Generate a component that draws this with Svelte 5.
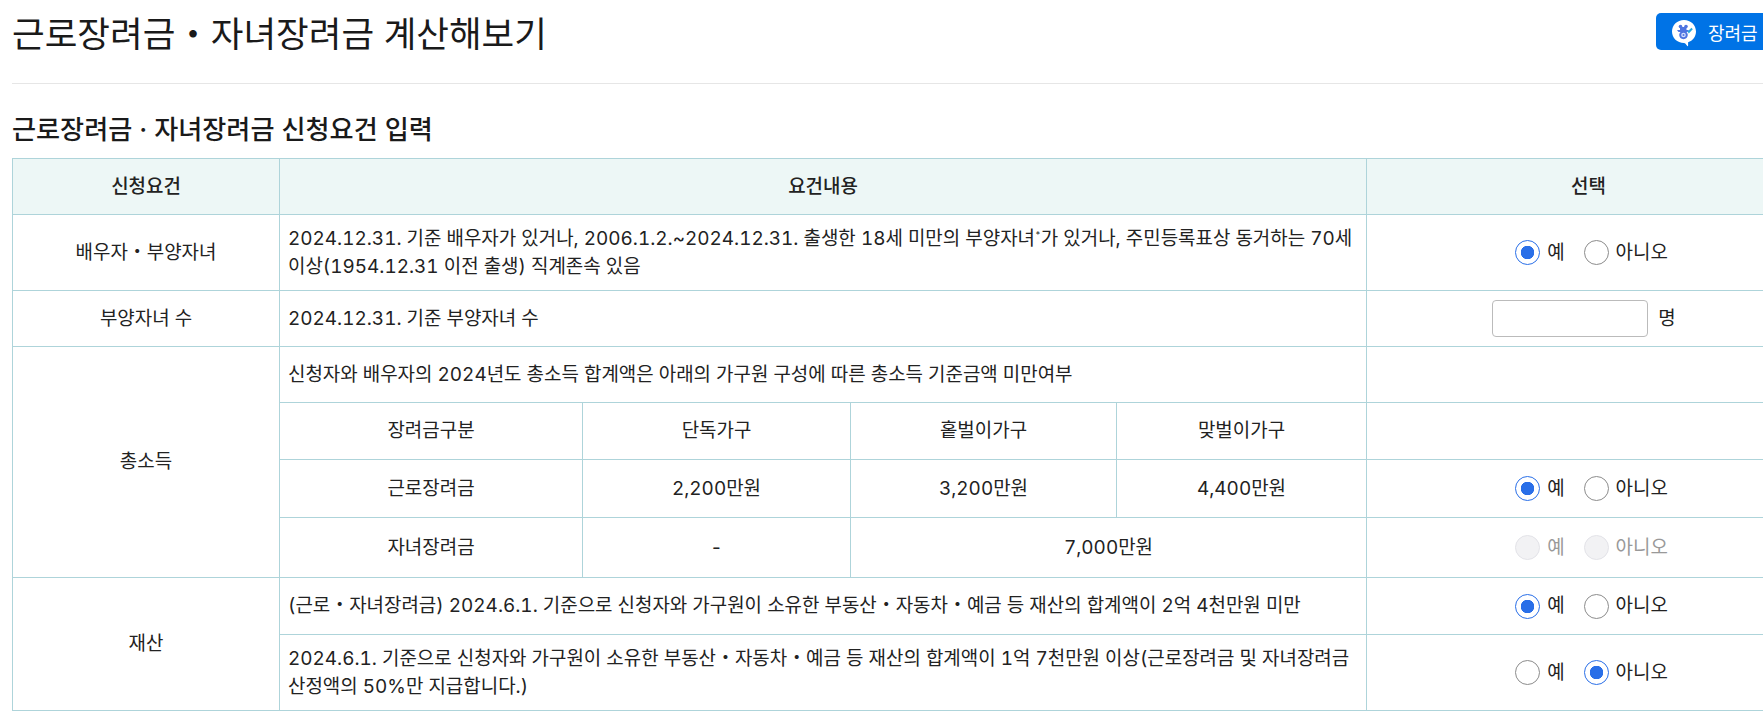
<script>
  const choice = (name, yes, disabled = false) => ({ name, yes, disabled });
</script>

{#snippet radios(c)}
  <div class="radios" class:off={c.disabled}>
    <label class="opt"><input type="radio" name={c.name} checked={c.yes === true} disabled={c.disabled} /><span>예</span></label>
    <label class="opt"><input type="radio" name={c.name} checked={c.yes === false} disabled={c.disabled} /><span>아니오</span></label>
  </div>
{/snippet}

<div class="page">
  <header class="top">
    <h1>근로장려금・자녀장려금 계산해보기</h1>
    <button class="cta" type="button">
      <svg class="logo" viewBox="0 0 26 28" width="26" height="28" aria-hidden="true">
        <path d="M13 1C6.200 1 1 6 1 12.500S6.200 24 13 24c.6 0 1.100.2 1.500.7l1.800 2.300c.3.400.8.200.8-.3v-3.400c4.700-1.600 7.900-5.800 7.900-10.800C25 6 19.800 1 13 1z" fill="#fff"/>
        <circle cx="9.500" cy="7.500" r="1.800" fill="#4f74e0"/>
        <circle cx="15" cy="7.500" r="1.800" fill="#4f74e0"/>
        <path d="M9 8h6.500v3H9z" fill="#4f74e0"/>
        <path d="M6 11h12l-1.500 2h-1c.8.800 1.300 1.900 1.300 3.100 0 2.300-1.900 4.100-4.300 4.100s-4.300-1.800-4.300-4.100c0-1.200.5-2.300 1.300-3.100H7.500z" fill="#4f74e0"/>
        <circle cx="12.500" cy="16" r="2.300" fill="#d5defb"/>
        <circle cx="12.500" cy="16" r="1" fill="#4f74e0"/>
        <path d="M16.500 12.500l4-3.700 1.300 1.500-4 4.200z" fill="#27a8e0"/>
      </svg>
      <span>장려금 안내</span>
    </button>
  </header>

  <h2>근로장려금 · 자녀장려금 신청요건 입력</h2>

  <table>
    <colgroup>
      <col class="c1" /><col class="c2" /><col class="c3" /><col class="c4" /><col class="c5" /><col class="c6" />
    </colgroup>
    <thead>
      <tr class="r56">
        <th>신청요건</th>
        <th colspan="4">요건내용</th>
        <th>선택</th>
      </tr>
    </thead>
    <tbody>
      <tr class="r76">
        <td class="ctr">배우자・부양자녀</td>
        <td colspan="4" class="txt">2024.12.31. 기준 배우자가 있거나, 2006.1.2.~2024.12.31. 출생한 18세 미만의 부양자녀<sup class="tick">*</sup>가 있거나, 주민등록표상 동거하는 70세 이상(1954.12.31 이전 출생) 직계존속 있음</td>
        <td class="ctr">{@render radios(choice('a', true))}</td>
      </tr>
      <tr class="r56">
        <td class="ctr">부양자녀 수</td>
        <td colspan="4" class="txt">2024.12.31. 기준 부양자녀 수</td>
        <td class="ctr">
          <div class="count"><input type="text" aria-label="부양자녀 수" /><span>명</span></div>
        </td>
      </tr>
      <tr class="r56">
        <td class="ctr" rowspan="4">총소득</td>
        <td colspan="4" class="txt">신청자와 배우자의 2024년도 총소득 합계액은 아래의 가구원 구성에 따른 총소득 기준금액 미만여부</td>
        <td></td>
      </tr>
      <tr class="r57">
        <td class="ctr">장려금구분</td>
        <td class="ctr">단독가구</td>
        <td class="ctr">홑벌이가구</td>
        <td class="ctr">맞벌이가구</td>
        <td></td>
      </tr>
      <tr class="r58">
        <td class="ctr">근로장려금</td>
        <td class="ctr">2,200만원</td>
        <td class="ctr">3,200만원</td>
        <td class="ctr">4,400만원</td>
        <td class="ctr">{@render radios(choice('b', true))}</td>
      </tr>
      <tr class="r60">
        <td class="ctr">자녀장려금</td>
        <td class="ctr">-</td>
        <td class="ctr" colspan="2">7,000만원</td>
        <td class="ctr">{@render radios(choice('c', null, true))}</td>
      </tr>
      <tr class="r57">
        <td class="ctr" rowspan="2">재산</td>
        <td colspan="4" class="txt">(근로・자녀장려금) 2024.6.1. 기준으로 신청자와 가구원이 소유한 부동산・자동차・예금 등 재산의 합계액이 2억 4천만원 미만</td>
        <td class="ctr">{@render radios(choice('d', true))}</td>
      </tr>
      <tr class="r76">
        <td colspan="4" class="txt">2024.6.1. 기준으로 신청자와 가구원이 소유한 부동산・자동차・예금 등 재산의 합계액이 1억 7천만원 이상(근로장려금 및 자녀장려금 산정액의 50%만 지급합니다.)</td>
        <td class="ctr">{@render radios(choice('e', false))}</td>
      </tr>
    </tbody>
  </table>
</div>

<style>
  :global(html), :global(body) {
    overflow: hidden;
    background: #fff;
  }
  .page {
    box-sizing: border-box;
    width: 1810px;
    padding-left: 12px;
    font-family: Inter, "Noto Sans CJK KR", "Noto Sans", sans-serif;
    font-variant-numeric: tabular-nums;
    color: #222;
  }
  .top {
    display: flex;
    justify-content: space-between;
    align-items: flex-start;
    height: 83px;
    border-bottom: 1px solid #e6e6e6;
  }
  h1 {
    margin: 10px 0 0;
    font-size: 35.500px;
    line-height: 50px;
    font-weight: 400;
    color: #1a1a1a;
    white-space: nowrap;
  }
  .cta {
    display: flex;
    align-items: center;
    gap: 11px;
    box-sizing: border-box;
    width: 154px;
    height: 37px;
    margin-top: 13px;
    padding: 0 0 0 15px;
    border: 0;
    border-radius: 5px;
    background: #0073e6;
    color: #fff;
    font: 400 18px Inter, "Noto Sans CJK KR", sans-serif;
    white-space: nowrap;
  }
  .logo { flex: none; margin-top: 3px; }
  h2 {
    margin: 29px 0 0;
    height: 45px;
    font-size: 26.150px;
    line-height: 34px;
    font-weight: 500;
    color: #1a1a1a;
  }
  table {
    border-collapse: collapse;
    table-layout: fixed;
    width: 1798px;
    font-size: 18.950px;
    line-height: 28px;
  }
  .c1 { width: 267px; }
  .c2 { width: 303px; }
  .c3 { width: 268px; }
  .c4 { width: 266px; }
  .c5 { width: 250px; }
  .c6 { width: 444px; }
  th, td {
    border: 1px solid #aed4da;
    padding: 0;
  }
  th {
    background: #edf7f6;
    font-weight: 500;
    text-align: center;
  }
  .r56 { height: 56px; }
  .r57 { height: 57px; }
  .r58 { height: 58px; }
  .r60 { height: 60px; }
  .r76 { height: 76px; }
  .ctr { text-align: center; }
  .txt { padding: 0 8px; }
  .tick { font-size: 9px; line-height: 0; }
  .radios {
    display: flex;
    justify-content: center;
    gap: 19px;
    margin-left: 6px;
  }
  .opt {
    display: inline-flex;
    align-items: center;
    gap: 7px;
  }
  .off { color: #999; }
  input[type="radio"] {
    appearance: none;
    box-sizing: border-box;
    width: 25px;
    height: 25px;
    margin: 0;
    border: 1px solid #8c8c8c;
    border-radius: 50%;
    background: #fff;
  }
  input[type="radio"]:checked {
    border-color: #2a6fe8;
    background: radial-gradient(circle, #2a6fe8 0 6.500px, #fff 7px);
  }
  input[type="radio"]:disabled {
    border-color: #e3e3e8;
    background: #f2f2f4;
  }
  .count {
    display: flex;
    justify-content: center;
    align-items: center;
    gap: 10px;
    margin-left: -9px;
  }
  .count input {
    box-sizing: border-box;
    width: 156px;
    height: 37px;
    border: 1px solid #bbb;
    border-radius: 4px;
    background: #fff;
  }
</style>
